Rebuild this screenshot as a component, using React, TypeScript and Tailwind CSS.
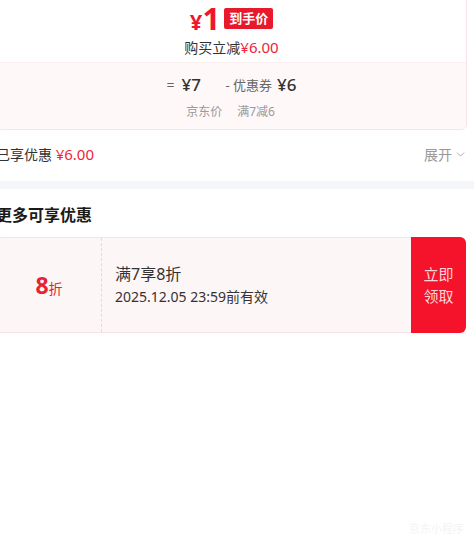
import { ChevronDown } from 'lucide-react'

const FONT = { fontFamily: '"Noto Sans", "Noto Sans CJK SC", sans-serif' }

export default function App() {
  return (
    <div className="w-[474px] h-[551px] bg-white overflow-hidden relative text-[#333]" style={FONT}>
      <div className="-ml-[4px] w-[471px]">
        {/* 到手价卡片 */}
        <div className="-mt-[8px] border border-[#f8e3e6] rounded-b-md overflow-hidden">
          <div className="h-[69px] flex flex-col items-center pt-[9px] bg-white">
            <div className="flex items-center gap-[4px] h-[32px]">
              <span className="text-[#f0162e] font-bold leading-none">
                <span className="text-[22px]">¥</span>
                <span className="text-[31px]">1</span>
              </span>
              <span className="bg-[#e8192c] text-white text-[13px] font-bold leading-none px-[5px] py-[4px] rounded-[2px]">
                到手价
              </span>
            </div>
            <div className="text-[14px] leading-[20px] mt-[3px] text-[#333]">
              购买立减<span className="text-[#f0243a] text-[15px]">¥6.00</span>
            </div>
          </div>
          <div className="h-[67px] bg-[#fff8f9] border-t border-[#fbeef0] flex flex-col items-center pt-[13px]">
            <div className="flex items-end leading-none">
              <span className="text-[14px] text-[#666] w-[15px] mb-[1px]">=</span>
              <span className="text-[17px] text-[#333] font-medium w-[44px]">¥7</span>
              <span className="text-[13px] text-[#666] mb-[1px] mr-[5px]">- 优惠券</span>
              <span className="text-[17px] text-[#333] font-medium">¥6</span>
            </div>
            <div className="flex text-[12px] text-[#9a9a9a] mt-[10px] -ml-[2px]">
              <span className="w-[51px]">京东价</span>
              <span>满7减6</span>
            </div>
          </div>
        </div>

        {/* 已享优惠 */}
        <div className="h-[51px] flex items-center justify-between">
          <div className="text-[14px] text-[#333] -mt-[2px]">
            已享优惠 <span className="text-[#f0243a] text-[15px]">¥6.00</span>
          </div>
          <div className="flex items-center text-[14px] text-[#999] -mt-[2px]">
            展开
            <ChevronDown size={13} strokeWidth={1.5} className="ml-[2px]" />
          </div>
        </div>
      </div>

      <div className="h-[8px] bg-[#f5f6fa]" />

      <div className="-ml-[4px] w-[471px]">
        <div className="h-[48px] flex items-center text-[16px] font-bold text-[#1a1a1a] pt-[4px]">
          更多可享优惠
        </div>

        {/* 优惠券 */}
        <div className="flex h-[96px] w-[470px]">
          <div className="flex-1 flex bg-[#fdf6f6] border border-r-0 border-[#f6e4e7] rounded-l-md">
            <div className="w-[105px] flex items-center justify-center border-r border-dashed border-[#efd3d7]">
              <span className="text-[#e8222f] font-bold leading-none">
                <span className="text-[23px]">8</span>
                <span className="text-[14px] font-normal">折</span>
              </span>
            </div>
            <div className="flex flex-col justify-center pl-[13px]">
              <div className="text-[16px] leading-[22px] text-[#333]">满7享8折</div>
              <div className="text-[14px] leading-[20px] text-[#333] mt-[2px]">2025.12.05 23:59前有效</div>
            </div>
          </div>
          <div className="w-[55px] bg-[#f5132b] rounded-r-md flex flex-col items-center justify-center text-[15px] leading-[22px] text-[#ffd6da]">
            <span>立即</span>
            <span>领取</span>
          </div>
        </div>
      </div>

      <div className="absolute right-[10px] bottom-[14px] text-[11px] text-[#f4f4f4]">京东小程序</div>
    </div>
  )
}
